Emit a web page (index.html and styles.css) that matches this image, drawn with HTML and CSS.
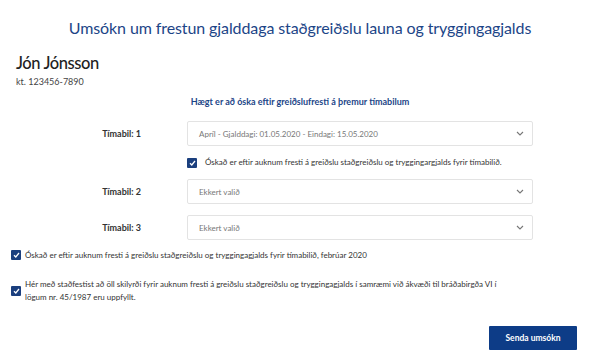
FILE: index.html
```html
<!DOCTYPE html>
<html lang="is">
<head>
  <meta charset="UTF-8" />
  <meta name="viewport" content="width=device-width, initial-scale=1.0"/>
  <title>Umsókn um frestun gjalddaga</title>
  <link rel="stylesheet" href="styles.css">
</head>
<body>
  <div class="page">
    <h1 class="title">Umsókn um frestun gjalddaga staðgreiðslu launa og tryggingagjalds</h1>

    <!-- Umsækjandi -->
    <div class="person">
      <div class="name">Jón Jónsson</div>
      <div class="kt">kt. 123456-7890</div>
    </div>

    <div class="subtitle">Hægt er að óska eftir greiðslufresti á þremur tímabilum</div>

    <!-- Tímabil -->
    <div class="periods">
      <div class="period-label">Tímabil: 1</div>
      <div class="select">
        <span>Apríl - Gjalddagi: 01.05.2020 - Eindagi: 15.05.2020</span>
        <svg class="chevron" width="8" height="5" viewBox="0 0 8 5"><path d="M1 1l3 3 3-3" fill="none" stroke="#777" stroke-width="1.1"/></svg>
      </div>

      <div></div>
      <label class="check small">
        <span class="box"><svg width="7" height="6" viewBox="0 0 7 6"><path d="M1 3.2l1.8 1.8L6 1" fill="none" stroke="#fff" stroke-width="1.3"/></svg></span>
        <span>Óskað er eftir auknum fresti á greiðslu staðgreiðslu og tryggingargjalds fyrir tímabilið.</span>
      </label>

      <div class="period-label">Tímabil: 2</div>
      <div class="select">
        <span>Ekkert valið</span>
        <svg class="chevron" width="8" height="5" viewBox="0 0 8 5"><path d="M1 1l3 3 3-3" fill="none" stroke="#777" stroke-width="1.1"/></svg>
      </div>

      <div class="period-label">Tímabil: 3</div>
      <div class="select">
        <span>Ekkert valið</span>
        <svg class="chevron" width="8" height="5" viewBox="0 0 8 5"><path d="M1 1l3 3 3-3" fill="none" stroke="#777" stroke-width="1.1"/></svg>
      </div>
    </div>

    <!-- Staðfesting -->
    <label class="check row-one">
      <span class="box"><svg width="7" height="6" viewBox="0 0 7 6"><path d="M1 3.2l1.8 1.8L6 1" fill="none" stroke="#fff" stroke-width="1.3"/></svg></span>
      <span>Óskað er eftir auknum fresti á greiðslu staðgreiðslu og tryggingagjalds fyrir tímabilið, febrúar 2020</span>
    </label>

    <label class="check row-two">
      <span class="box"><svg width="7" height="6" viewBox="0 0 7 6"><path d="M1 3.2l1.8 1.8L6 1" fill="none" stroke="#fff" stroke-width="1.3"/></svg></span>
      <span class="wrap-text">Hér með staðfestist að öll skilyrði fyrir auknum fresti á greiðslu staðgreiðslu og tryggingagjalds í samræmi við ákvæði til bráðabirgða VI í lögum nr. 45/1987 eru uppfyllt.</span>
    </label>

    <div class="actions">
      <button class="send-btn">Senda umsókn</button>
    </div>
  </div>
</body>
</html>
```

FILE: styles.css
```css
* { box-sizing: border-box; }

body {
  margin: 0;
  font-family: Lato, 'Liberation Sans', sans-serif;
  color: #333;
  background: #fff;
}

.page {
  padding: 0 16px;
}

.title {
  margin: 0;
  padding-top: 17px;
  font-size: 16px;
  font-weight: 400;
  line-height: 22px;
  letter-spacing: -0.1px;
  color: #1c4587;
  text-align: center;
}

.person {
  margin-top: 13px;
}

.name {
  font-size: 16.5px;
  font-weight: 500;
  line-height: 22px;
  letter-spacing: -0.4px;
  color: #222;
}

.kt {
  font-size: 9px;
  line-height: 15px;
  color: #444;
}

.subtitle {
  margin-top: 7px;
  font-size: 9px;
  font-weight: 700;
  line-height: 12px;
  color: #1c4587;
  text-align: center;
}

.periods {
  display: grid;
  grid-template-columns: 125px 346px;
  column-gap: 46px;
  row-gap: 11px;
  align-items: center;
  margin-top: 13px;
}

.period-label {
  font-size: 9px;
  font-weight: 700;
  color: #333;
  text-align: right;
}

.select {
  display: flex;
  justify-content: space-between;
  align-items: center;
  height: 25px;
  padding: 0 8px 0 11px;
  border: 1px solid #e3e3e3;
  border-radius: 2px;
  font-size: 8px;
  color: #777;
}

.chevron { display: block; }

.check {
  display: flex;
  align-items: flex-start;
  gap: 4px;
  font-size: 8px;
  line-height: 13px;
  color: #333;
}

.check.small {
  gap: 8px;
  line-height: 11px;
  height: 11px;
}

.check .box {
  flex: none;
  display: flex;
  align-items: center;
  justify-content: center;
  width: 10px;
  height: 10px;
  margin-top: 1px;
  background: #1b3f7e;
  border-radius: 1px;
}

.check.small .box { margin-top: 0.5px; }

.check .box svg { display: block; }

.row-one {
  margin-top: 9px;
  margin-left: -5px;
}

.row-two {
  margin-top: 16px;
  margin-left: -5px;
}

.row-two .box {
  margin-top: 7.5px;
}

.wrap-text {
  max-width: 475px;
}

.actions {
  display: flex;
  justify-content: flex-end;
  margin-top: 22px;
  padding-right: 7px;
}

.send-btn {
  width: 88px;
  height: 24px;
  border: none;
  border-radius: 1px;
  background: #0d3c87;
  color: #fff;
  font-family: inherit;
  font-size: 8.5px;
  font-weight: 700;
  cursor: pointer;
}
```
